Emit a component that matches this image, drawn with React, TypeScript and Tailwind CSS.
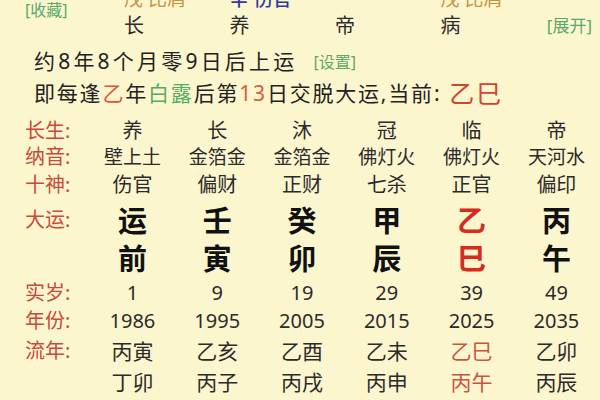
import type { ReactNode } from "react";

const COLS = "grid grid-cols-[65px_repeat(6,84.8px)] pl-[25px]";

type Cell = { t: string; red?: boolean };

const rows: { label: string; h: string; cls: string; cells: Cell[] }[] = [
  { label: "长生:", h: "h-[26px]", cls: "text-[20px] text-[#2b2b2b]", cells: ["养", "长", "沐", "冠", "临", "帝"].map((t) => ({ t })) },
  { label: "纳音:", h: "h-[26px]", cls: "text-[19px] text-[#2b2b2b]", cells: ["壁上土", "金箔金", "金箔金", "佛灯火", "佛灯火", "天河水"].map((t) => ({ t })) },
  { label: "十神:", h: "h-[30px]", cls: "text-[20px] text-[#2b2b2b]", cells: ["伤官", "偏财", "正财", "七杀", "正官", "偏印"].map((t) => ({ t })) },
];

function Label({ children }: { children: ReactNode }) {
  return <span className="text-[20px] leading-none text-[#c84a3a]">{children}</span>;
}

export default function App() {
  return (
    <div
      className="h-[400px] w-[600px] overflow-hidden bg-[#fcf6cf]"
      style={{ fontFamily: '"Noto Sans", "Noto Sans CJK SC", sans-serif' }}
    >
      {/* 藏干 row is cut off by the top edge */}
      <div className="-mt-[15px] grid grid-cols-[124px_repeat(4,105.5px)_1fr] grid-rows-[28px_26px]">
        <div className="row-span-2 pl-[25px] pt-[15px] text-[16px] leading-[20px] text-[#5aa96b]">[收藏]</div>
        <div className="flex items-center text-[19px] text-[#c99342]">戊 比肩</div>
        <div className="flex items-center text-[19px] font-medium text-[#2c3aa0]">辛 伤官</div>
        <div />
        <div className="flex items-center text-[19px] text-[#c99342]">戊 比肩</div>
        <div />
        {["长", "养", "帝", "病"].map((t) => (
          <div key={t} className="flex items-center text-[20px] text-[#2b2b2b]">
            {t}
          </div>
        ))}
        <div className="flex items-center justify-end pr-[8px] text-[17px] text-[#5aa96b]">[展开]</div>
      </div>

      <div className="mt-[11px] flex h-[24px] items-center pl-[34px] text-[21px] tracking-[3.2px] text-[#222]">
        约8年8个月零9日后上运
        <span className="ml-[16px] text-[16px] tracking-normal text-[#5aa96b]">[设置]</span>
      </div>
      <div className="mt-[6px] flex h-[28px] items-center pl-[34px] text-[21px] tracking-[1.8px] text-[#222]">
        即每逢<span className="text-[#e0533d]">乙</span>年<span className="text-[#52ad5f]">白露</span>后第
        <span className="text-[#d4603c]">13</span>日交脱大运,当前:
        <span className="ml-[8px] text-[25px] text-[#d3432e]">乙巳</span>
      </div>

      <div className="mt-[10px]">
        {rows.map((r) => (
          <div key={r.label} className={`${COLS} ${r.h} items-center`}>
            <Label>{r.label}</Label>
            {r.cells.map((c, i) => (
              <span key={i} className={`text-center leading-none ${r.cls}`}>
                {c.t}
              </span>
            ))}
          </div>
        ))}

        {/* 大运 two rows */}
        <div className={`${COLS} h-[40px] items-center`}>
          <Label>大运:</Label>
          {["运", "壬", "癸", "甲", "乙", "丙"].map((t, i) => (
            <span key={i} className={`text-center text-[29px] font-bold leading-none ${i === 4 ? "text-[#d92a1e]" : "text-[#111]"}`}>
              {t}
            </span>
          ))}
        </div>
        <div className={`${COLS} h-[36px] items-center`}>
          <span />
          {["前", "寅", "卯", "辰", "巳", "午"].map((t, i) => (
            <span key={i} className={`text-center text-[29px] font-bold leading-none ${i === 4 ? "text-[#d92a1e]" : "text-[#111]"}`}>
              {t}
            </span>
          ))}
        </div>

        <div className={`${COLS} h-[34px] items-center`}>
          <Label>实岁:</Label>
          {["1", "9", "19", "29", "39", "49"].map((t) => (
            <span key={t} className="text-center text-[20px] leading-none text-[#2b2b2b]">
              {t}
            </span>
          ))}
        </div>
        <div className={`${COLS} h-[22px] items-center`}>
          <Label>年份:</Label>
          {["1986", "1995", "2005", "2015", "2025", "2035"].map((t) => (
            <span key={t} className="text-center text-[20px] leading-none text-[#2b2b2b]">
              {t}
            </span>
          ))}
        </div>
        <div className={`${COLS} h-[38px] items-center`}>
          <Label>流年:</Label>
          {["丙寅", "乙亥", "乙酉", "乙未", "乙巳", "乙卯"].map((t, i) => (
            <span key={t} className={`text-center text-[21px] leading-none ${i === 4 ? "text-[#c9553f]" : "text-[#2b2b2b]"}`}>
              {t}
            </span>
          ))}
        </div>
        <div className={`${COLS} h-[24px] items-center`}>
          <span />
          {["丁卯", "丙子", "丙戌", "丙申", "丙午", "丙辰"].map((t, i) => (
            <span key={t} className={`text-center text-[21px] leading-none ${i === 4 ? "text-[#c9553f]" : "text-[#2b2b2b]"}`}>
              {t}
            </span>
          ))}
        </div>
      </div>
    </div>
  );
}
